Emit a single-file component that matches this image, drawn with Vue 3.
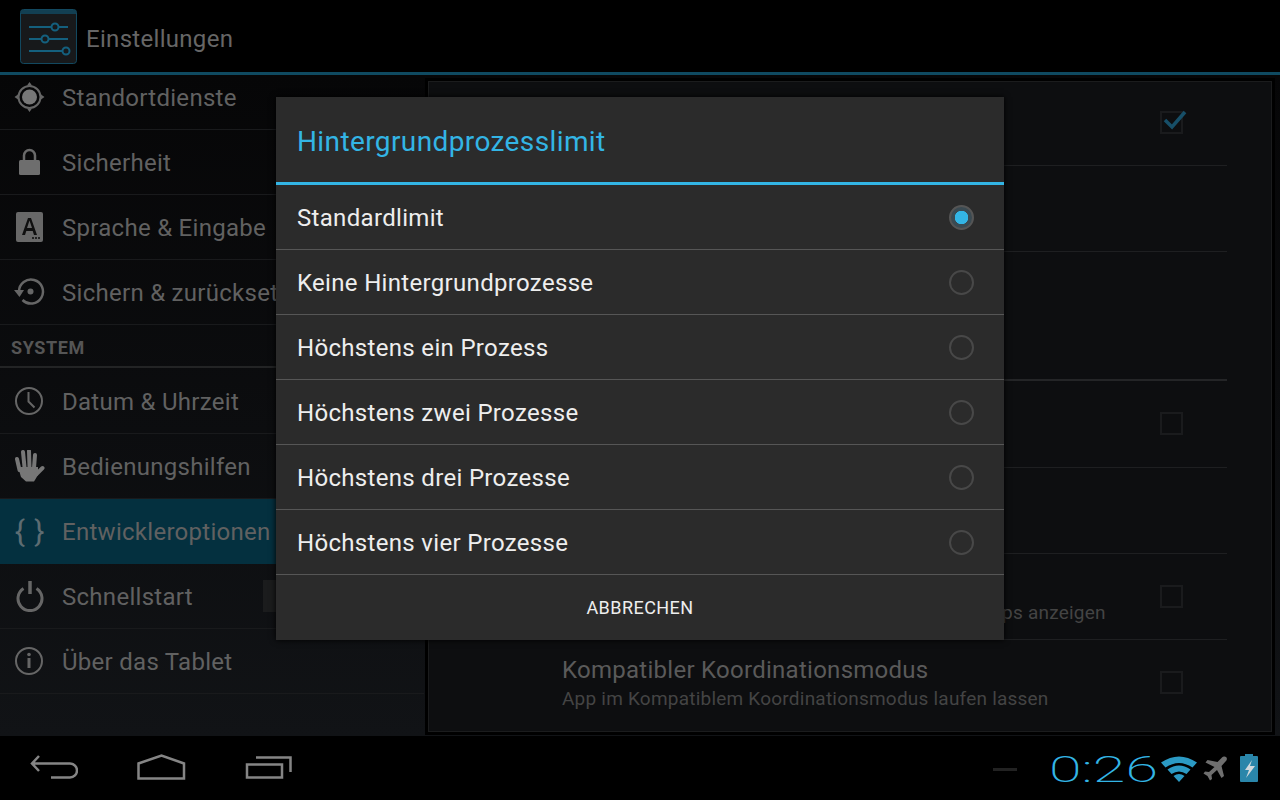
<script setup>
const sideTop = [
  { label: 'Standortdienste', icon: 'location' },
  { label: 'Sicherheit', icon: 'lock' },
  { label: 'Sprache & Eingabe', icon: 'key' },
  { label: 'Sichern & zurücksetzen', icon: 'restore' },
];
const sideSystem = [
  { label: 'Datum & Uhrzeit', icon: 'clock' },
  { label: 'Bedienungshilfen', icon: 'hand' },
  { label: 'Entwickleroptionen', icon: 'braces', active: true },
  { label: 'Schnellstart', icon: 'power', toggle: true },
  { label: 'Über das Tablet', icon: 'info' },
];

const icons = {
  location: '<circle cx="15.500" cy="16" r="11" fill="none" stroke="#666" stroke-width="2"/><circle cx="15.500" cy="16" r="7.500" fill="#777"/><path d="M15.500 1l2.500 3.500h-5zM15.500 31l2.500-3.500h-5zM0.500 16l3.500-2.500v5zM30.500 16l-3.500-2.500v5z" fill="#666"/>',
  lock: '<path d="M10 15V9.500a5.500 5.500 0 0 1 11 0V15" fill="none" stroke="#6a6a6a" stroke-width="2.500"/><rect x="5" y="14" width="21" height="15" rx="1.500" fill="#6e6e6e"/>',
  key: '<rect x="2" y="1" width="27" height="30" rx="2" fill="#686868"/><path d="M8 24l6-17h3l6 17h-3l-1.300-4h-6.400l-1.300 4zM13 17h5l-2.500-7.500z" fill="#101010" fill-rule="evenodd"/><path d="M18 27h8" stroke="#222" stroke-width="2" stroke-dasharray="2 1"/>',
  restore: '<path d="M5 15.500a12 12 0 1 1 3.500 8.500" fill="none" stroke="#666" stroke-width="2.500"/><path d="M0 14h10l-4.500 7z" fill="#666"/><circle cx="16.500" cy="15.500" r="3" fill="#666"/>',
  clock: '<circle cx="15" cy="16" r="13" fill="none" stroke="#666" stroke-width="2"/><path d="M14.500 7v9.500l6 6" fill="none" stroke="#666" stroke-width="2"/>',
  hand: '<path d="M4 17h20v8l-4 6.500h-8L7 27z" fill="#777"/><path d="M3 9l2.500 11M9 2l1.500 15M15 1l.5 16M21 5l-1 13M28.500 18l-6 6" fill="none" stroke="#777" stroke-width="4" stroke-linecap="round"/>',
  power: '<path d="M9.500 8.500a12 12 0 1 0 13 0" fill="none" stroke="#666" stroke-width="3"/><path d="M16 1v13" stroke="#666" stroke-width="3.500"/>',
  info: '<circle cx="15" cy="16" r="13" fill="none" stroke="#666" stroke-width="2"/><circle cx="15" cy="9.500" r="1.800" fill="#666"/><path d="M15 13v10" stroke="#666" stroke-width="3"/>',
};

const radios = [
  'Standardlimit',
  'Keine Hintergrundprozesse',
  'Höchstens ein Prozess',
  'Höchstens zwei Prozesse',
  'Höchstens drei Prozesse',
  'Höchstens vier Prozesse',
];

// rows of the pane behind the dialog, most of their text is covered by it
const prefs = [
  { check: 'on' },
  {},
  { tall: true },
  { check: 'off' },
  {},
  { title: 'Alle ANRs anzeigen', sub: 'Dialogfeld "App antwortet nicht" für Hintergrund-Apps anzeigen', check: 'off' },
  { title: 'Kompatibler Koordinationsmodus', sub: 'App im Kompatiblem Koordinationsmodus laufen lassen', check: 'off', last: true },
];
</script>

<template>
  <div class="screen">
    <header class="actionbar">
      <svg class="appicon" width="57" height="55" viewBox="0 0 57 55">
        <rect x="0.500" y="0.500" width="56" height="54" rx="3" fill="#17191b" stroke="#12485f"/>
        <rect x="1" y="1" width="55" height="4" fill="#123f52"/>
        <path d="M9 18h22M39 18h9M9 30h12M29 30h19M9 42h33M50 42h-1" stroke="#14607e" stroke-width="2"/>
        <circle cx="35" cy="18" r="3.500" fill="none" stroke="#14607e" stroke-width="2"/>
        <circle cx="25" cy="30" r="3.500" fill="none" stroke="#14607e" stroke-width="2"/>
        <circle cx="46" cy="42" r="3.500" fill="none" stroke="#14607e" stroke-width="2"/>
      </svg>
      <span class="actionbar__title">Einstellungen</span>
    </header>

    <main class="content">
      <nav class="side">
        <div class="side__list">
          <div v-for="item in sideTop" :key="item.label" class="side__row">
            <svg class="side__icon" width="32" height="32" viewBox="0 0 32 32" v-html="icons[item.icon]"></svg>
            <span class="side__label">{{ item.label }}</span>
          </div>
          <div class="side__header">SYSTEM</div>
          <div
            v-for="item in sideSystem"
            :key="item.label"
            class="side__row"
            :class="{ 'side__row--active': item.active }"
          >
            <span v-if="item.icon === 'braces'" class="side__braces">{ }</span>
            <svg v-else class="side__icon" width="32" height="32" viewBox="0 0 32 32" v-html="icons[item.icon]"></svg>
            <span class="side__label">{{ item.label }}</span>
            <span v-if="item.toggle" class="side__toggle"></span>
          </div>
        </div>
      </nav>

      <section class="pane">
        <div
          v-for="(pref, i) in prefs"
          :key="i"
          class="pref"
          :class="{ 'pref--tall': pref.tall, 'pref--last': pref.last }"
        >
          <div class="pref__text">
            <div v-if="pref.title" class="pref__title">{{ pref.title }}</div>
            <div v-if="pref.sub" class="pref__sub">{{ pref.sub }}</div>
          </div>
          <svg v-if="pref.check" class="pref__check" width="30" height="30" viewBox="0 0 30 30">
            <rect x="1" y="7" width="21" height="21" fill="none" stroke="#1a1b1d" stroke-width="2"/>
            <path v-if="pref.check === 'on'" d="M5 15l7 7L25 7" fill="none" stroke="#174f68" stroke-width="3.500"/>
          </svg>
        </div>
      </section>
    </main>

    <footer class="navbar">
      <div class="navbar__buttons">
        <svg width="48" height="26" viewBox="0 0 48 26">
          <path d="M9 2L2 9.500 9 17M3 9.500h37a6.500 6.500 0 0 1 0 14H21" fill="none" stroke="#858585" stroke-width="2.500"/>
        </svg>
        <svg width="50" height="26" viewBox="0 0 50 26">
          <path d="M2.500 24.500V9.500L25.500 1.500 48 9.500V24.500z" fill="none" stroke="#858585" stroke-width="2.500"/>
        </svg>
        <svg width="48" height="26" viewBox="0 0 48 26">
          <rect x="3" y="10.500" width="35" height="13" fill="none" stroke="#858585" stroke-width="2.500"/>
          <path d="M12 3.500h34.500V18" fill="none" stroke="#858585" stroke-width="2.500"/>
        </svg>
      </div>
      <div class="status">
        <span class="status__dash"></span>
        <span class="status__clock">0:26</span>
        <svg class="status__wifi" width="36" height="28" viewBox="0 0 36 28">
          <path d="M0 7.500 Q18 -4.500 36 7.500L31.500 12.500 Q18 3.500 4.500 12.500z" fill="#2b9ac4"/>
          <path d="M6.500 14.500 Q18 6.500 29.500 14.500L25.500 19 Q18 14 10.500 19z" fill="#2b9ac4"/>
          <path d="M12.500 21 Q18 17 23.500 21L18 27z" fill="#2b9ac4"/>
        </svg>
        <svg class="status__plane" width="26" height="26" viewBox="0 0 26 26">
          <path d="M24 1c1.500 1 1 3-.500 4.500L19.500 10l2.500 10-2.500 2-4.500-8-5.500 5 .5 4-2 1.500L5.500 20l-4-2.500L3 15.500l4 .5 5.500-5-9-4.500 2-2.500L15.500 6 20 1.500C21 .500 23 0 24 1z" fill="#6f6f6f"/>
        </svg>
        <svg class="status__battery" width="18" height="28" viewBox="0 0 18 28">
          <rect x="5" y="0" width="8" height="3" fill="#2a86aa"/>
          <rect x="0" y="2" width="18" height="26" rx="1" fill="#2a86aa"/>
          <path d="M12 6L5 16h4l-3 8 9-12H10z" fill="#d0d8dc"/>
        </svg>
      </div>
    </footer>

    <div class="dialog">
      <h2 class="dialog__title">Hintergrundprozesslimit</h2>
      <div v-for="(label, i) in radios" :key="label" class="dialog__row">
        <span class="dialog__label">{{ label }}</span>
        <span class="radio" :class="{ 'radio--on': i === 0 }"></span>
      </div>
      <div class="dialog__action">ABBRECHEN</div>
    </div>
  </div>
</template>

<style scoped>
  .screen {
    position: relative;
    display: flex;
    flex-direction: column;
    width: 1280px;
    height: 800px;
    overflow: hidden;
    font-family: Roboto, "Liberation Sans", sans-serif;
    background-color: black;
  }

  .actionbar {
    display: flex;
    align-items: center;
    gap: 9px;
    flex: none;
    height: 72px;
    padding: 1px 0 0 20px;
    box-sizing: border-box;
  }

  .actionbar__title {
    padding-top: 5px;
    font-size: 24px;
    letter-spacing: 0.3px;
    color: #666;
  }

  .content {
    display: flex;
    flex: none;
    height: 661px;
    border-top: 3px solid #0f4a61;
    background: linear-gradient(#060607, #111316);
  }

  .side {
    flex: none;
    width: 424px;
    overflow: hidden;
  }

  .side__list {
    margin-top: -10px;
  }

  .side__row {
    position: relative;
    display: flex;
    align-items: center;
    gap: 16px;
    height: 65px;
    padding-left: 14px;
    box-sizing: border-box;
    font-size: 24px;
    letter-spacing: 0.28px;
    white-space: nowrap;
    color: #616161;
    border-bottom: 1px solid #191a1c;
  }

  .side__row--active {
    background-color: #04303f;
    border-bottom-color: #04303f;
  }

  .side__label {
    padding-top: 2px;
  }

  .side__icon {
    flex: none;
  }

  .side__braces {
    flex: none;
    width: 32px;
    font-size: 30px;
    letter-spacing: 1px;
    text-align: center;
    white-space: nowrap;
    color: #5d6c72;
  }

  .side__toggle {
    position: absolute;
    top: 16px;
    left: 263px;
    width: 13px;
    height: 32px;
    background-color: #1b1c1d;
  }

  .side__header {
    display: flex;
    align-items: center;
    height: 43px;
    margin-bottom: 1px;
    padding: 3px 0 0 11px;
    box-sizing: border-box;
    font-size: 18px;
    font-weight: 700;
    letter-spacing: 0.6px;
    color: #555;
    border-bottom: 2px solid #232425;
  }

  .pane {
    flex: none;
    width: 844px;
    height: 651px;
    margin: 6px 0 0 4px;
    padding-left: 48px;
    box-sizing: border-box;
    background-color: #0d0e10;
    border: 1px solid #1b1c1d;
    outline: 3px solid black;
  }

  .pref {
    position: relative;
    display: flex;
    align-items: center;
    width: 750px;
    height: 86px;
    padding-left: 85px;
    box-sizing: border-box;
    border-bottom: 1px solid #1e1f21;
  }

  .pref:first-child {
    height: 84px;
  }

  .pref:first-child .pref__check {
    margin-top: -19px;
  }

  .pref--tall {
    height: 129px;
    border-bottom: 2px solid #242527;
  }

  .pref--tall + .pref {
    height: 87px;
  }

  .pref--last {
    border-bottom: 0;
  }

  .pref__text {
    padding-top: 2px;
    white-space: nowrap;
  }

  .pref__title {
    font-size: 24px;
    line-height: 30px;
    letter-spacing: 0.27px;
    color: #5a5a5a;
  }

  .pref__sub {
    font-size: 19px;
    line-height: 28px;
    letter-spacing: 0.22px;
    color: #444;
  }

  .pref__check {
    position: absolute;
    top: 50%;
    left: 683px;
    margin-top: -18px;
  }

  .navbar {
    display: flex;
    align-items: center;
    justify-content: space-between;
    flex: none;
    height: 64px;
    padding: 0 22px 0 30px;
    box-sizing: border-box;
  }

  .navbar__buttons {
    display: flex;
    align-items: center;
    gap: 58px;
    margin-top: -3px;
  }

  .status {
    display: flex;
    align-items: center;
    height: 100%;
  }

  .status__dash {
    width: 24px;
    height: 3px;
    margin-top: 2px;
    margin-right: 32px;
    background-color: #222;
  }

  .status__clock {
    width: 106px;
    margin-top: 2px;
    font-size: 37px;
    font-weight: 200;
    line-height: 1;
    color: #33b5e5;
    transform: scaleX(1.6);
    transform-origin: left center;
  }

  .status__wifi {
    margin-top: 2px;
    margin-left: 6px;
  }

  .status__plane {
    margin-top: 2px;
    margin-left: 5px;
  }

  .status__battery {
    margin-left: 12px;
  }

  .dialog {
    position: absolute;
    top: 97px;
    left: 276px;
    width: 728px;
    height: 543px;
    background-color: #2b2b2b;
    box-shadow: 0 0 6px black;
  }

  .dialog__title {
    display: flex;
    align-items: center;
    height: 88px;
    margin: 0;
    padding: 3px 0 0 21px;
    box-sizing: border-box;
    font-size: 28px;
    font-weight: 400;
    letter-spacing: 0.39px;
    color: #33b5e5;
    border-bottom: 3px solid #33b5e5;
  }

  .dialog__row {
    display: flex;
    align-items: center;
    justify-content: space-between;
    height: 65px;
    padding: 0 30px 0 21px;
    box-sizing: border-box;
    font-size: 24px;
    letter-spacing: 0.32px;
    color: #eee;
    border-bottom: 1px solid #565656;
  }

  .dialog__label {
    padding-top: 2px;
  }

  .radio {
    width: 25px;
    height: 25px;
    box-sizing: border-box;
    border: 2px solid #484848;
    border-radius: 50%;
  }

  .radio--on {
    background: radial-gradient(circle, #33b5e5 0 6.500px, #3a4a52 7px 100%);
    border-color: #555;
  }

  .dialog__action {
    display: flex;
    align-items: center;
    justify-content: center;
    height: 65px;
    font-size: 18px;
    letter-spacing: 0.45px;
    color: #eee;
  }
</style>
